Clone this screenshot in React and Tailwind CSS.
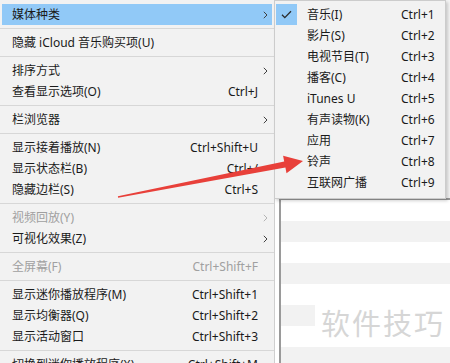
const font = "font-['Segoe_UI','Noto_Sans','Noto_Sans_CJK_SC',sans-serif]";

const items = [
  { label: '媒体种类', sub: true, active: true },
  'sep',
  { label: '隐藏 iCloud 音乐购买项(U)' },
  'sep',
  { label: '排序方式', sub: true },
  { label: '查看显示选项(O)', key: 'Ctrl+J' },
  'sep',
  { label: '栏浏览器', sub: true },
  'sep',
  { label: '显示接着播放(N)', key: 'Ctrl+Shift+U' },
  { label: '显示状态栏(B)', key: 'Ctrl+/' },
  { label: '隐藏边栏(S)', key: 'Ctrl+S' },
  'sep',
  { label: '视频回放(Y)', sub: true, disabled: true },
  { label: '可视化效果(Z)', sub: true },
  'sep',
  { label: '全屏幕(F)', key: 'Ctrl+Shift+F', disabled: true },
  'sep',
  { label: '显示迷你播放程序(M)', key: 'Ctrl+Shift+1' },
  { label: '显示均衡器(Q)', key: 'Ctrl+Shift+2' },
  { label: '显示活动窗口', key: 'Ctrl+Shift+3' },
  'sep',
  { label: '切换到迷你播放程序(X)', key: 'Ctrl+Shift+M' },
];

const subItems = [
  { label: '音乐(I)', key: 'Ctrl+1', checked: true },
  { label: '影片(S)', key: 'Ctrl+2' },
  { label: '电视节目(T)', key: 'Ctrl+3' },
  { label: '播客(C)', key: 'Ctrl+4' },
  { label: 'iTunes U', key: 'Ctrl+5' },
  { label: '有声读物(K)', key: 'Ctrl+6' },
  { label: '应用', key: 'Ctrl+7' },
  { label: '铃声', key: 'Ctrl+8' },
  { label: '互联网广播', key: 'Ctrl+9' },
];

function Chevron({ disabled }) {
  return (
    <svg width="5" height="8" viewBox="0 0 5 8" fill="none">
      <path d="M0.8 0.8 L4 4 L0.8 7.2" stroke={disabled ? '#b4b4b4' : '#404040'} strokeWidth="1" />
    </svg>
  );
}

function MenuRow({ item }) {
  const text = item.disabled ? 'text-[#a0a0a0]' : 'text-[#1a1a1a]';
  return (
    <div className={`mx-[2px] h-[21px] flex items-center pl-[10px] ${item.active ? 'bg-[#91c9f7]' : ''} ${text}`}>
      <span className="flex-1 whitespace-nowrap">{item.label}</span>
      {item.key && <span className="whitespace-nowrap">{item.key}</span>}
      <span className="w-[14px] flex justify-center pl-[1px]">{item.sub && <Chevron disabled={item.disabled} />}</span>
    </div>
  );
}

function Separator() {
  return (
    <div className="h-[7px] flex items-center">
      <div className="h-px w-full bg-[#d7d7d7]" />
    </div>
  );
}

export default function App() {
  return (
    <div className={`relative w-[450px] h-[363px] overflow-hidden bg-white text-[12px] leading-none ${font}`}>
      <div className="flex h-full">
        <div className="w-[275px] shrink-0 h-full bg-[#f2f2f2] border-r border-[#cfcfcf] pt-[4px]">
          {items.map((it, i) => (it === 'sep' ? <Separator key={i} /> : <MenuRow key={i} item={it} />))}
        </div>
        <div className="flex-1 flex flex-col bg-white">
          <div className="h-[198px] shrink-0 bg-[#f4f4f4]" />
          <div className="relative flex-1 ml-[4px] border-l-2 border-t-2 border-[#9a9a9a] flex flex-col">
            {[0, 1, 2, 3, 4, 5, 6, 7].map((r) => (
              <div key={r} className={`h-[21px] shrink-0 ${r % 2 === 1 ? 'bg-[#f2f2f2]' : 'bg-white'}`} />
            ))}
            <div className="absolute left-[34px] top-[98px] w-[140px] h-[48px] bg-white flex items-center pl-[6px] text-[29px] text-[#d6d6d6] font-['Noto_Sans_CJK_SC',sans-serif] tracking-[2px] whitespace-nowrap">
              软件技巧
            </div>
          </div>
        </div>
      </div>

      {/* submenu */}
      <div className="absolute left-[274px] top-0 w-[172px] h-[199px] bg-[#f2f2f2] border border-[#cccccc] shadow-[2px_2px_3px_rgba(0,0,0,0.18)] pt-[3px]">
        {subItems.map((s, i) => (
          <div key={i} className="ml-[1px] mr-[2px] h-[21px] flex items-center text-[#1a1a1a]">
            <span className={`w-[21px] h-[21px] flex items-center justify-center ${s.checked ? 'bg-[#91c9f7]' : ''}`}>
              {s.checked && (
                <svg width="11" height="9" viewBox="0 0 11 9" fill="none">
                  <path d="M1 4.8 L3.8 7.6 L10 1.2" stroke="#2a2a2a" strokeWidth="1.3" />
                </svg>
              )}
            </span>
            <span className="flex-1 pl-[10px] whitespace-nowrap">{s.label}</span>
            <span className="w-[42px] whitespace-nowrap">{s.key}</span>
          </div>
        ))}
      </div>

      {/* red arrow annotation */}
      <svg className="absolute left-0 top-0" width="450" height="363" viewBox="0 0 450 363">
        <polygon
          points="117.9,196.3 284.2,161.6 283.1,155.7 303,161 286.5,173.3 285.4,167.4 118.1,197.7"
          fill="#e8403a"
        />
      </svg>
    </div>
  );
}
